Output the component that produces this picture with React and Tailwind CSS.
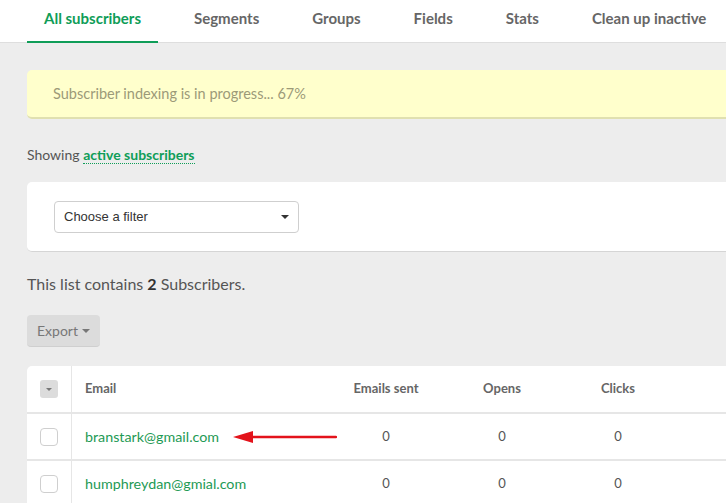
import React from 'react';

const tabs = ['All subscribers', 'Segments', 'Groups', 'Fields', 'Stats', 'Clean up inactive'];

const rows = [
  { email: 'branstark@gmail.com', sent: 0, opens: 0, clicks: 0, arrow: true },
  { email: 'humphreydan@gmial.com', sent: 0, opens: 0, clicks: 0 },
];

const App = () => {
  return (
    <div className="min-h-screen w-[726px] overflow-hidden bg-[#ededed] font-['Lato',sans-serif] text-[#555]">
      {/* Tabs */}
      <nav className="h-[43px] bg-white border-b border-[#dedede] flex gap-[19px] pl-[27px] whitespace-nowrap">
        {tabs.map((t, i) => (
          <div
            key={t}
            className={
              i === 0
                ? 'px-[17px] h-[43px] flex items-center border-b-2 border-[#0f9d58] text-[#0f9d58] text-[15px] font-bold -mb-px'
                : 'px-[17px] h-[42px] flex items-center text-[#666] text-[15px] font-bold'
            }
          >
            <span className="-mt-[5px]">{t}</span>
          </div>
        ))}
      </nav>

      <div className="pl-[27px]">
        {/* Banner */}
        <div className="mt-[27px] h-[49px] w-[720px] bg-[#ffffcc] border-b-2 border-[#e0e0b0] rounded-l-[5px] flex items-center pl-[26px] text-[14.5px] text-[#9c9a78]">
          Subscriber indexing is in progress... 67%
        </div>

        <p className="mt-[25px] text-[14px] text-[#555]">
          Showing{' '}
          <span className="font-bold text-[#0f9d58] border-b border-dotted border-[#0f9d58]">active subscribers</span>
        </p>

        {/* Filter card */}
        <div className="mt-[17px] h-[70px] w-[720px] bg-white rounded-l-[5px] border-b border-[#d5d5d5] flex items-center pl-[27px]">
          <div className="h-[32px] w-[245px] border border-[#cfcfcf] rounded-[4px] bg-white flex items-center justify-between pl-[9px] pr-[9px] text-[13px] text-[#333] font-['Liberation_Sans',sans-serif]">
            <span>Choose a filter</span>
            <span className="w-0 h-0 border-l-[4px] border-r-[4px] border-t-[4px] border-l-transparent border-r-transparent border-t-[#333]" />
          </div>
        </div>

        <p className="mt-[20px] text-[16px] text-[#555]">
          This list contains <span className="font-bold text-[#333]">2</span> Subscribers.
        </p>

        <button className="mt-[19px] h-[32px] w-[73px] bg-[#dcdcdc] border-b border-[#cfcfcf] rounded-[4px] flex items-center justify-center gap-1 text-[14px] text-[#777]">
          Export
          <span className="w-0 h-0 border-l-[4px] border-r-[4px] border-t-[4px] border-l-transparent border-r-transparent border-t-[#777]" />
        </button>

        {/* Table */}
        <div className="mt-[19px] w-[720px] bg-white rounded-tl-[5px]">
          <div className="flex h-[48px] border-b-2 border-[#e6e6e6]">
            <div className="w-[45px] border-r border-[#e6e6e6] flex items-center justify-center">
              <div className="w-[18px] h-[18px] rounded-[3px] bg-[#dcdcdc] flex items-center justify-center">
                <span className="w-0 h-0 border-l-[3px] border-r-[3px] border-t-[3px] border-l-transparent border-r-transparent border-t-[#777]" />
              </div>
            </div>
            <div className="w-[256px] pl-[13px] flex items-center text-[13px] font-bold text-[#666]">Email</div>
            <div className="w-[116px] flex items-center justify-center text-[13px] font-bold text-[#666]">Emails sent</div>
            <div className="w-[116px] flex items-center justify-center text-[13px] font-bold text-[#666]">Opens</div>
            <div className="w-[116px] flex items-center justify-center text-[13px] font-bold text-[#666]">Clicks</div>
          </div>
          {rows.map((r) => (
            <div key={r.email} className="flex h-[47px] border-b-2 border-[#e6e6e6]">
              <div className="w-[45px] border-r border-[#e6e6e6] flex items-center justify-center">
                <div className="w-[18px] h-[18px] rounded-[4px] border border-[#cfcfcf] bg-white" />
              </div>
              <div className="w-[256px] pl-[13px] flex items-center gap-[14px] text-[14.3px] text-[#1e9a55] whitespace-nowrap">
                {r.email}
                {r.arrow && (
                  <svg width="104" height="14" viewBox="0 0 104 14" className="shrink-0">
                    <path d="M0 7 L20 1 L20 13 Z" fill="#e3131b" />
                    <line x1="18" y1="7" x2="103" y2="7" stroke="#e3131b" strokeWidth="2.4" strokeLinecap="round" />
                  </svg>
                )}
              </div>
              <div className="w-[116px] flex items-center justify-center text-[13px] text-[#555]">{r.sent}</div>
              <div className="w-[116px] flex items-center justify-center text-[13px] text-[#555]">{r.opens}</div>
              <div className="w-[116px] flex items-center justify-center text-[13px] text-[#555]">{r.clicks}</div>
            </div>
          ))}
        </div>
      </div>
    </div>
  );
};

export default App;
